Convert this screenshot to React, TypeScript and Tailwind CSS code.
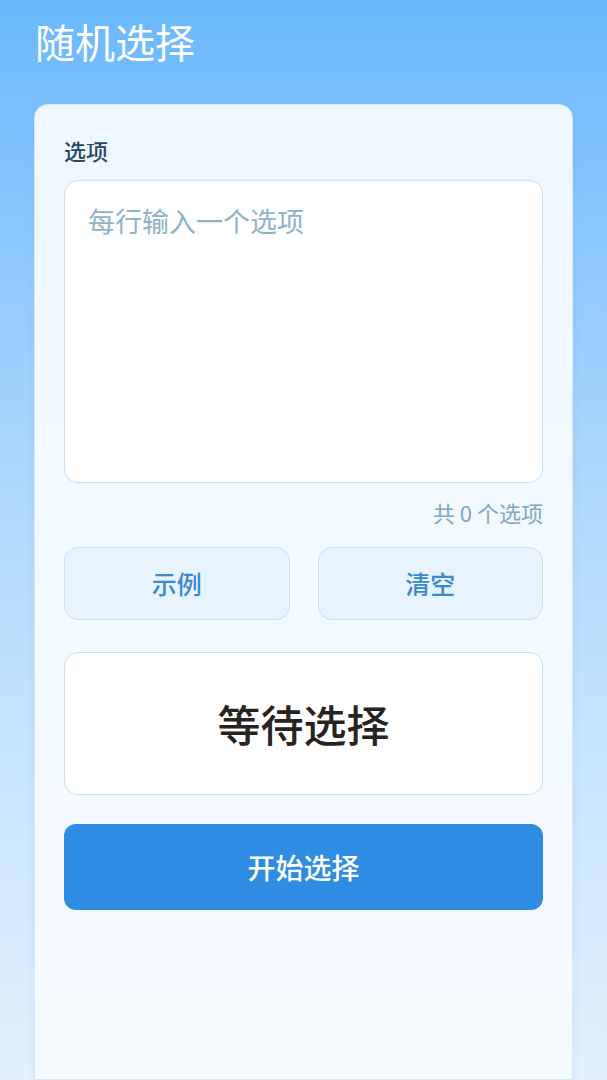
const font = { fontFamily: '"Noto Sans CJK SC", "Noto Sans", sans-serif' };

export default function App() {
  return (
    <div
      style={font}
      className="h-[1080px] overflow-hidden flex flex-col bg-gradient-to-b from-[#69b8fc] via-[#b4dbfd] to-[#e3f1fe]"
    >
      {/* Header */}
      <div className="h-[104px] shrink-0 px-[35px] pt-[12px]">
        <h1 className="text-[40px] leading-[58px] text-white">随机选择</h1>
      </div>

      {/* Card */}
      <div className="flex-1 mx-[34px] rounded-t-[14px] bg-[#f6fbff]/95 border border-[#d6e9f7] px-[29px] pt-[30px] shadow-[0_2px_10px_rgba(80,150,210,0.12)]">
        <div className="text-[22px] leading-[31px] font-medium text-[#284866]">选项</div>

        <textarea
          placeholder="每行输入一个选项"
          className="mt-[14px] block w-full h-[303px] resize-none rounded-[14px] border border-[#c9e1f1] bg-white px-[23px] pt-[20px] text-[27px] leading-[40px] text-[#2a3b4c] placeholder:text-[#8eb2c9] outline-none"
        />

        <div className="mt-[14px] text-right text-[22px] leading-[30px] text-[#80a8c5]">共 0 个选项</div>

        <div className="mt-[20px] grid grid-cols-2 gap-[28px]">
          <button className="h-[73px] rounded-[14px] border border-[#c8e1f2] bg-[#e7f4fe] text-[25px] font-medium text-[#3a89cc]">
            示例
          </button>
          <button className="h-[73px] rounded-[14px] border border-[#c8e1f2] bg-[#e7f4fe] text-[25px] font-medium text-[#3a89cc]">
            清空
          </button>
        </div>

        <div className="mt-[32px] h-[143px] rounded-[14px] border border-[#c9e1f1] bg-white flex items-center justify-center">
          <span className="text-[43px] font-medium text-[#27231f]">等待选择</span>
        </div>

        <button className="mt-[29px] w-full h-[86px] rounded-[12px] bg-[#2f8ce3] text-white text-[28px] font-medium">
          开始选择
        </button>
      </div>
    </div>
  );
}
